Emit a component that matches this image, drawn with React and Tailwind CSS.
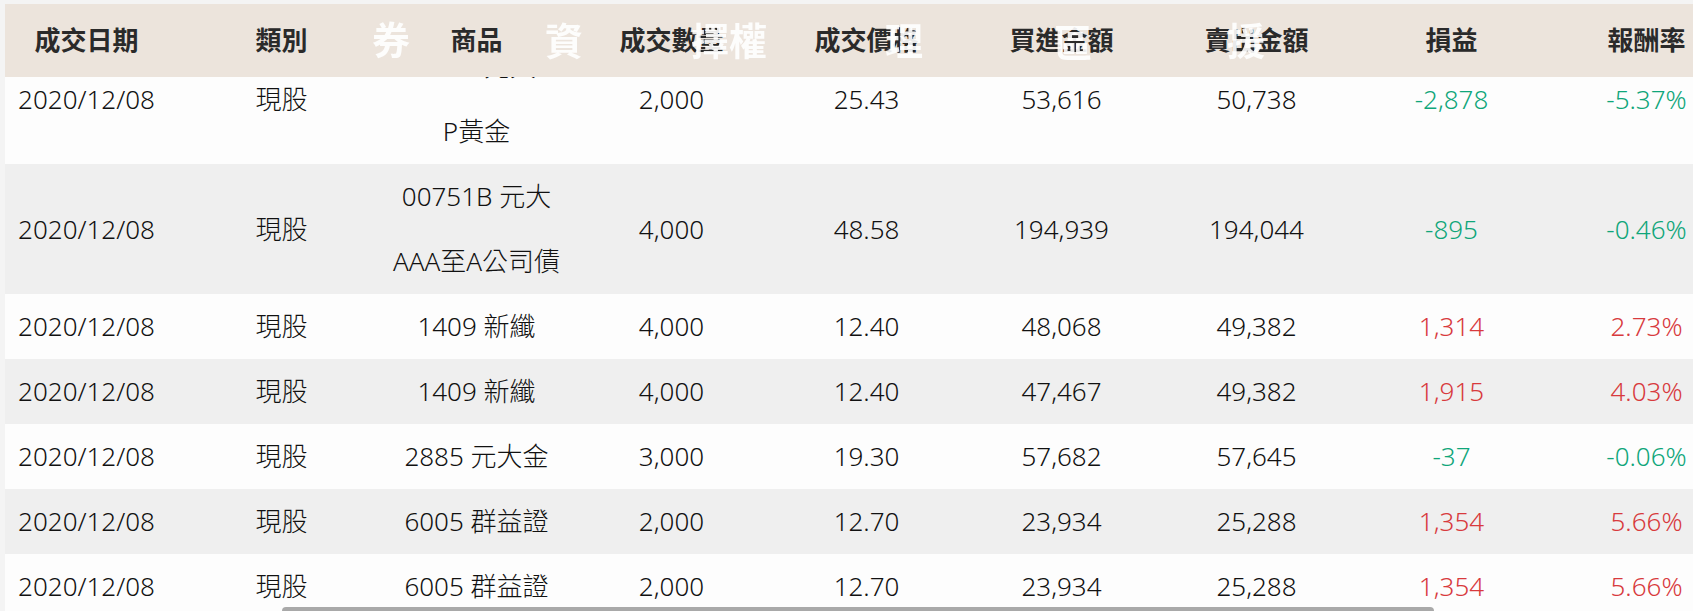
import { useLayoutEffect, useRef } from "react"

const columns = ["成交日期", "類別", "商品", "成交數量", "成交價格", "買進金額", "賣出金額", "損益", "報酬率"]

const rows = [
  { product: ["00635U 元大S&", "P黃金"], qty: "2,000", price: "25.43", buy: "53,616", sell: "50,738", pl: "-2,878", rate: "-5.37%" },
  { product: ["00751B 元大", "AAA至A公司債"], qty: "4,000", price: "48.58", buy: "194,939", sell: "194,044", pl: "-895", rate: "-0.46%" },
  { product: ["1409 新纖"], qty: "4,000", price: "12.40", buy: "48,068", sell: "49,382", pl: "1,314", rate: "2.73%" },
  { product: ["1409 新纖"], qty: "4,000", price: "12.40", buy: "47,467", sell: "49,382", pl: "1,915", rate: "4.03%" },
  { product: ["2885 元大金"], qty: "3,000", price: "19.30", buy: "57,682", sell: "57,645", pl: "-37", rate: "-0.06%" },
  { product: ["6005 群益證"], qty: "2,000", price: "12.70", buy: "23,934", sell: "25,288", pl: "1,354", rate: "5.66%" },
  { product: ["6005 群益證"], qty: "2,000", price: "12.70", buy: "23,934", sell: "25,288", pl: "1,354", rate: "5.66%" },
]

// watermark glyphs that show up on the beige header
const marks = [
  { text: "券", cls: "left-[372px] top-[20px]" },
  { text: "資", cls: "left-[545px] top-[21px]" },
  { text: "擇權", cls: "left-[691px] top-[21px]" },
  { text: "理", cls: "left-[885px] top-[21px]" },
  { text: "區", cls: "left-[1054px] top-[23px]" },
  { text: "援", cls: "left-[1227px] top-[21px]" },
]

export default function App() {
  const scrollRef = useRef(null)

  useLayoutEffect(() => {
    if (!scrollRef.current) return
    scrollRef.current.scrollTop = 43
    scrollRef.current.scrollLeft = 16
  }, [])

  return (
    <div className="relative w-[1693px] h-[611px] overflow-hidden bg-[#f4f4f4] font-['Noto_Sans','Noto_Sans_CJK_TC',sans-serif] text-[26px] text-[#111]">
      <div ref={scrollRef} className="ml-[5px] mt-[4px] h-[607px] w-[1688px] overflow-hidden bg-[#fdfdfd]">
        <div className="w-[1755px]">
          {/* Header */}
          <div className="sticky top-0 z-10 grid grid-cols-[repeat(9,195px)] h-[73px] items-center bg-[#ece4dc]">
            {columns.map((c) => (
              <div key={c} className="text-center font-bold text-[#2a2a2a]">
                {c}
              </div>
            ))}
          </div>

          {/* Rows */}
          {rows.map((r, i) => {
            const neg = r.pl.startsWith("-")
            const color = neg ? "text-[#0fa67a]" : "text-[#d83a3d]"
            return (
              <div
                key={i}
                className={`grid grid-cols-[repeat(9,195px)] items-center leading-[65px] font-light ${i % 2 === 1 ? "bg-[#efefef]" : "bg-[#fdfdfd]"}`}
              >
                <div className="text-center">2020/12/08</div>
                <div className="text-center">現股</div>
                <div className="text-center">
                  {r.product.map((p) => (
                    <div key={p}>{p}</div>
                  ))}
                </div>
                <div className="text-center">{r.qty}</div>
                <div className="text-center">{r.price}</div>
                <div className="text-center">{r.buy}</div>
                <div className="text-center">{r.sell}</div>
                <div className={`text-center ${color}`}>{r.pl}</div>
                <div className={`text-center ${color}`}>{r.rate}</div>
              </div>
            )
          })}
        </div>
      </div>

      {/* watermark */}
      {marks.map((m) => (
        <span
          key={m.text}
          className={`absolute ${m.cls} z-20 text-[38px] leading-none font-bold text-white/90 pointer-events-none`}
        >
          {m.text}
        </span>
      ))}

      {/* horizontal scroll thumb */}
      <div className="absolute left-[282px] top-[607px] z-20 h-[8px] w-[1152px] rounded-full bg-[#a9a9a9]" />
    </div>
  )
}
